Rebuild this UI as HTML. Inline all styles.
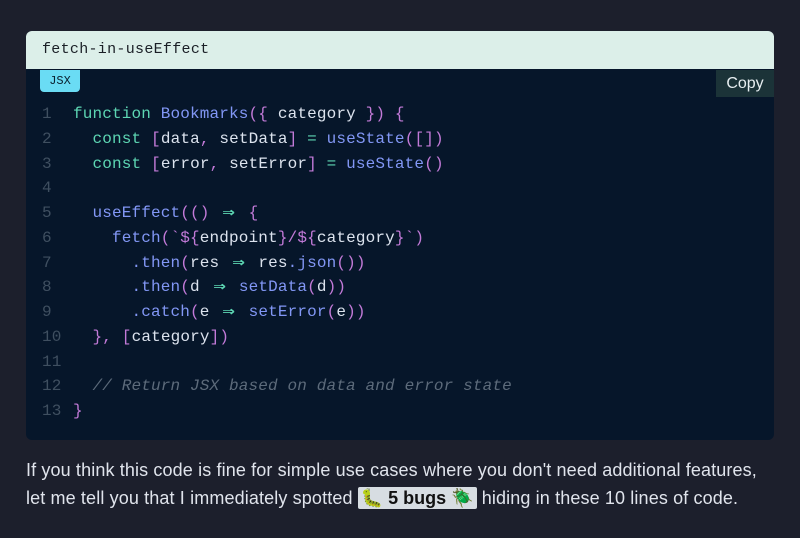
<!DOCTYPE html>
<html><head><meta charset="utf-8"><style>
html,body{margin:0;padding:0;background:#1c1f2c;width:800px;height:538px;overflow:hidden}
.card{position:absolute;left:26px;top:31px;width:748px;height:409px;background:#06162a;border-radius:6px;overflow:hidden}
.hdr{height:38px;background:#dcefe9;font:15px "Liberation Mono",monospace;color:#1a1f26;line-height:38px;padding-left:16px;letter-spacing:0.3px}
.badge{position:absolute;left:14px;top:39px;width:40px;height:22px;background:#6adcf4;border-radius:0 0 4px 4px;font:12px "Liberation Mono",monospace;color:#0b2130;text-align:center;line-height:22px}
.copy{position:absolute;right:0;top:39px;width:58px;height:27px;background:#1b3338;color:#e6eef0;font:16px "Liberation Sans",sans-serif;text-align:center;line-height:27px}
pre{position:absolute;left:0;top:71px;margin:0;font:16px/24.75px "Liberation Mono",monospace;letter-spacing:0.15px;color:#dce3ee}
.n{display:inline-block;width:47px;text-align:left;padding-left:16px;box-sizing:border-box;color:#3f4f60}
.k{color:#5dd6b3}.f{color:#8297f5}.p{color:#c27ad8}.c{color:#5d6b7b;font-style:italic}
.a{color:#5dd6b3;display:inline-block;width:19.5px;height:16px;line-height:16px;vertical-align:baseline;text-align:center;font-family:"DejaVu Sans Mono",monospace;font-weight:bold;transform:scaleX(1.3)}
.txt{position:absolute;left:26px;top:456px;width:780px;white-space:nowrap;font:18px/28px "Liberation Sans",sans-serif;color:#e0e4ec;letter-spacing:0.13px}
.bug{background:#d7dde2;color:#111;font-weight:bold;padding:1px 3px;border-radius:2px;letter-spacing:0}
</style></head><body>
<div class="card">
<div class="hdr">fetch-in-useEffect</div>
<div class="badge">JSX</div>
<div class="copy">Copy</div>
<pre><span class="n">1</span><span class="k">function</span> <span class="f">Bookmarks</span><span class="p">({</span> category <span class="p">})</span> <span class="p">{</span>
<span class="n">2</span>  <span class="k">const</span> <span class="p">[</span>data<span class="p">,</span> setData<span class="p">]</span> <span class="k">=</span> <span class="f">useState</span><span class="p">([])</span>
<span class="n">3</span>  <span class="k">const</span> <span class="p">[</span>error<span class="p">,</span> setError<span class="p">]</span> <span class="k">=</span> <span class="f">useState</span><span class="p">()</span>
<span class="n">4</span>
<span class="n">5</span>  <span class="f">useEffect</span><span class="p">(()</span> <span class="a">⇒</span> <span class="p">{</span>
<span class="n">6</span>    <span class="f">fetch</span><span class="p">(`${</span>endpoint<span class="p">}/${</span>category<span class="p">}`)</span>
<span class="n">7</span>      <span class="f">.then</span><span class="p">(</span>res <span class="a">⇒</span> res<span class="f">.json</span><span class="p">())</span>
<span class="n">8</span>      <span class="f">.then</span><span class="p">(</span>d <span class="a">⇒</span> <span class="f">setData</span><span class="p">(</span>d<span class="p">))</span>
<span class="n">9</span>      <span class="f">.catch</span><span class="p">(</span>e <span class="a">⇒</span> <span class="f">setError</span><span class="p">(</span>e<span class="p">))</span>
<span class="n">10</span>  <span class="p">},</span> <span class="p">[</span>category<span class="p">])</span>
<span class="n">11</span>
<span class="n">12</span>  <span class="c">// Return JSX based on data and error state</span>
<span class="n">13</span><span class="p">}</span></pre>
</div>
<div class="txt">If you think this code is fine for simple use cases where you don't need additional features,<br>let me tell you that I immediately spotted <span class="bug">🐛 5 bugs 🪲</span> hiding in these 10 lines of code.</div>
</body></html>
